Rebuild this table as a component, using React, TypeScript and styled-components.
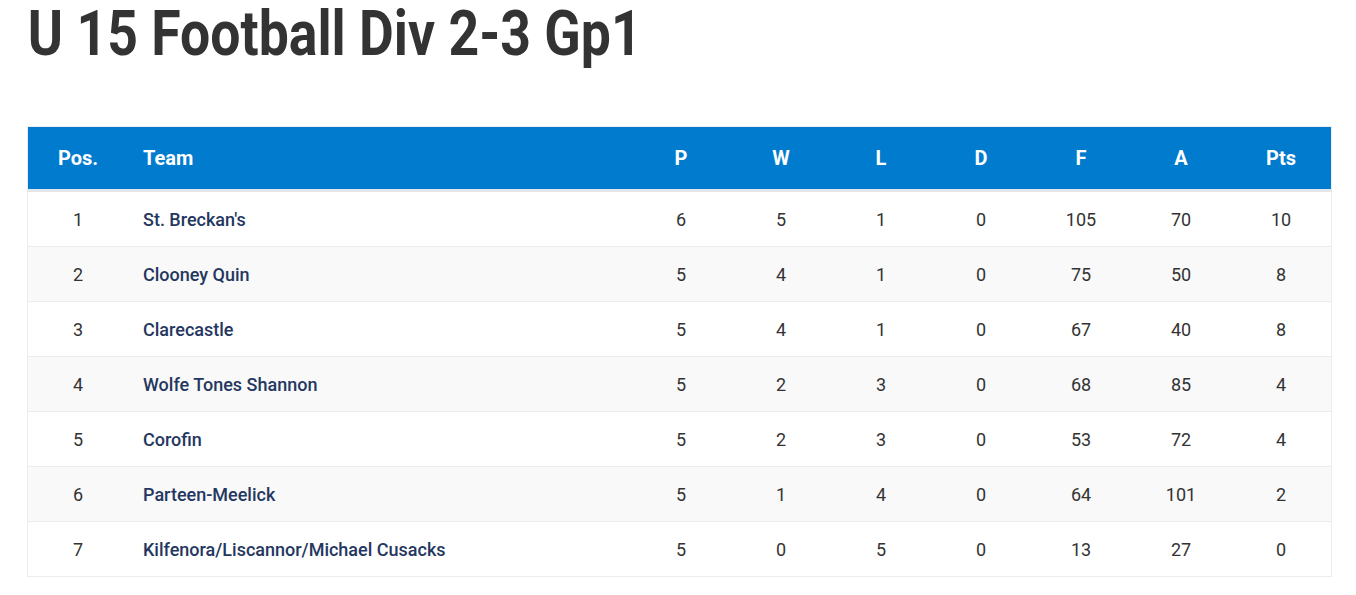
import React from 'react';
import styled, { createGlobalStyle } from 'styled-components';

const GlobalStyle = createGlobalStyle`
  body {
    margin: 0;
    background: #ffffff;
    font-family: Roboto, "Liberation Sans", sans-serif;
  }
`;

const Page = styled.div`
  padding: 0 25px 0 27px;
`;

const TitleBar = styled.div`
  height: 126px;
`;

const Title = styled.h1`
  display: inline-block;
  margin: 0;
  padding-top: 1px;
  padding-left: 1px;
  font-family: Roboto, sans-serif;
  font-weight: 700;
  font-size: 63px;
  line-height: 66px;
  color: #333333;
  white-space: nowrap;
  transform: scaleX(0.85);
  transform-origin: left top;
`;

const Table = styled.table`
  width: 1305px;
  border-collapse: collapse;
  table-layout: fixed;
  border: 1px solid #ececec;
`;

const HeadRow = styled.tr`
  background: #017bce;
  border-bottom: 3px solid #e4e7ea;
`;

const HeadCell = styled.th<{ $left?: boolean }>`
  height: 62px;
  padding: 0 ${(p) => (p.$left ? '15px' : '0')};
  text-align: ${(p) => (p.$left ? 'left' : 'center')};
  color: #ffffff;
  font-size: 20px;
  font-weight: 700;
  width: ${(p) => (p.$left ? 'auto' : '100px')};
`;

const Row = styled.tr<{ $alt: boolean }>`
  background: ${(p) => (p.$alt ? '#f9f9f9' : '#ffffff')};
  border-top: 1px solid #ececec;
`;

const Cell = styled.td`
  height: 54px;
  padding: 0;
  text-align: center;
  font-size: 18px;
  color: #333333;
`;

const TeamCell = styled.td`
  padding: 0 15px;
  font-size: 18px;
  font-weight: 500;
  color: #243760;
`;

type Entry = [string, number, number, number, number, number, number, number];

const rows: Entry[] = [
  ["St. Breckan's", 6, 5, 1, 0, 105, 70, 10],
  ['Clooney Quin', 5, 4, 1, 0, 75, 50, 8],
  ['Clarecastle', 5, 4, 1, 0, 67, 40, 8],
  ['Wolfe Tones Shannon', 5, 2, 3, 0, 68, 85, 4],
  ['Corofin', 5, 2, 3, 0, 53, 72, 4],
  ['Parteen-Meelick', 5, 1, 4, 0, 64, 101, 2],
  ['Kilfenora/Liscannor/Michael Cusacks', 5, 0, 5, 0, 13, 27, 0],
];

const stats = ['P', 'W', 'L', 'D', 'F', 'A', 'Pts'];

const App: React.FC = () => {
  return (
    <Page>
      <GlobalStyle />
      <TitleBar>
        <Title>U 15 Football Div 2-3 Gp1</Title>
      </TitleBar>
      <Table>
        <thead>
          <HeadRow>
            <HeadCell>Pos.</HeadCell>
            <HeadCell $left>Team</HeadCell>
            {stats.map((s) => (
              <HeadCell key={s}>{s}</HeadCell>
            ))}
          </HeadRow>
        </thead>
        <tbody>
          {rows.map(([team, ...nums], i) => (
            <Row key={team} $alt={i % 2 === 1}>
              <Cell>{i + 1}</Cell>
              <TeamCell>{team}</TeamCell>
              {nums.map((n, j) => (
                <Cell key={j}>{n}</Cell>
              ))}
            </Row>
          ))}
        </tbody>
      </Table>
    </Page>
  );
};

export default App;
